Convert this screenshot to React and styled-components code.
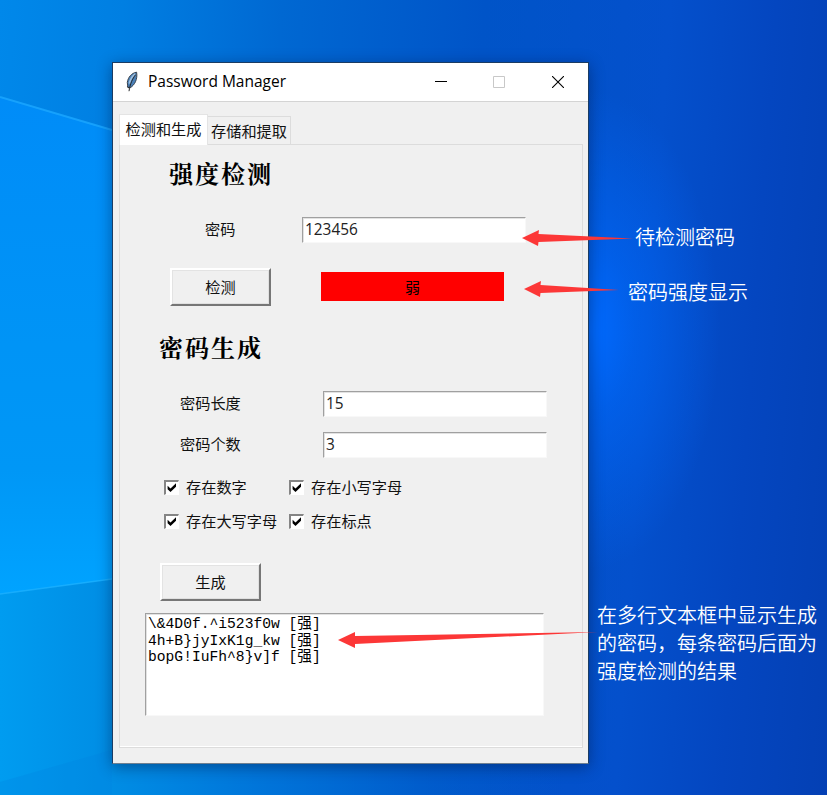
import React from "react";
import styled, { createGlobalStyle } from "styled-components";

const Global = createGlobalStyle`
  * { box-sizing: border-box; }
  body { margin: 0; }
`;

const ui = `"Open Sans", "Noto Sans CJK SC", sans-serif`;

const Desktop = styled.main`
  position: relative;
  width: 827px;
  height: 795px;
  overflow: hidden;
  display: flex;
  padding: 62px 0 0 112px;
  font-family: ${ui};
  background:
    radial-gradient(ellipse 130px 240px at 590px 330px, rgba(0, 106, 255, 1) 0%, rgba(0, 106, 255, 0.55) 35%, rgba(0, 106, 255, 0) 100%),
    linear-gradient(94deg, #0088ea 0%, #007fe2 14%, #0068d2 32%, #0054c8 55%, #0450cc 76%, #0446c0 88%, #0440b4 100%);
`;

const Wallpaper = styled.svg`
  position: absolute;
  inset: 0;
`;

const Window = styled.section`
  position: relative;
  width: 477px;
  height: 702px;
  flex: none;
  border: 1px solid #1b3c63;
  border-bottom-color: #6f8091;
  background: #f0f0f0;
  box-shadow: 0 3px 14px rgba(0, 20, 60, 0.45);
`;

const TitleBar = styled.header`
  display: flex;
  align-items: center;
  height: 39px;
  padding: 0 1px 0 11px;
  background: #fff;
  border-bottom: 1px solid #d4d4d4;
`;

const Title = styled.h1`
  flex: 1;
  margin: 0 0 2px 7px;
  font: 400 15.5px/20px ${ui};
  color: #000;
`;

const WindowButton = styled.button`
  display: flex;
  align-items: center;
  justify-content: center;
  width: 58.5px;
  height: 38px;
  padding: 0;
  border: 0;
  background: none;
`;

const Body = styled.div`
  padding: 12px 5px 0 6px;
`;

const Tabs = styled.nav`
  display: flex;
  align-items: flex-end;
  height: 30px;
`;

const Tab = styled.button`
  display: flex;
  align-items: center;
  justify-content: center;
  width: ${(p) => (p.$active ? 89 : 83)}px;
  height: ${(p) => (p.$active ? 31 : 28)}px;
  margin-bottom: ${(p) => (p.$active ? -1 : 0)}px;
  padding: 0 0 ${(p) => (p.$active ? 2 : 0)}px;
  border: 1px solid ${(p) => (p.$active ? "#e4e4e4" : "#dcdcdc")};
  border-bottom: 0;
  border-left-width: ${(p) => (p.$active ? 1 : 0)}px;
  background: ${(p) => (p.$active ? "#fff" : "#f0f0f0")};
  font: 15.2px/20px ${ui};
  color: #111;
  white-space: nowrap;
  z-index: ${(p) => (p.$active ? 1 : 0)};
`;

const Panel = styled.div`
  width: 464px;
  height: 604px;
  border: 1px solid #dcdcdc;
  box-shadow: inset 0 -1px #fff;
`;

const Heading = styled.h2`
  margin: 0;
  padding: ${(p) => p.$top}px 0 0 ${(p) => p.$left}px;
  font: 700 24px/34px "Noto Serif CJK SC", "Noto Sans CJK SC", serif;
  letter-spacing: 2px;
  color: #000;
`;

const Row = styled.div`
  display: flex;
  align-items: center;
  height: ${(p) => p.$height}px;
  margin-top: ${(p) => p.$gap}px;
  padding-left: ${(p) => p.$left}px;
`;

const Label = styled.label`
  width: ${(p) => p.$width}px;
  padding-bottom: 2px;
  font: 15.2px/20px ${ui};
  color: #111;
`;

const Entry = styled.input`
  width: 224px;
  height: 26px;
  padding: 0 1px 1px 2px;
  border: 1px solid #f8f8f8;
  border-top-color: #a0a0a0;
  border-left-color: #a0a0a0;
  border-radius: 0;
  outline: none;
  background: #fff;
  box-shadow: inset 1px 1px #e2e2e2;
  font: 15.4px/22px ${ui};
  color: #222;
`;

const PushButton = styled.button`
  width: 101px;
  height: 38px;
  padding: 0 0 1px;
  border: 2px solid #fff;
  border-right-color: #767676;
  border-bottom-color: #767676;
  background: #f0f0f0;
  box-shadow: inset 1px 1px #e3e3e3, inset -1px -1px #e0e0e0;
  font: 15.2px/20px ${ui};
  color: #111;
`;

const Strength = styled.output`
  display: flex;
  align-items: center;
  justify-content: center;
  width: 183px;
  height: 29px;
  margin: 0 0 1px 50px;
  background: #f00;
  font: 15px/20px ${ui};
  color: #000;
`;

const Options = styled.div`
  display: grid;
  grid-template-columns: 125px 140px;
  grid-auto-rows: 34px;
  margin-top: 12px;
  padding-left: 44px;
`;

const Option = styled.label`
  display: flex;
  align-items: center;
  gap: 7px;
  font: 15.2px/20px ${ui};
  color: #111;
  white-space: nowrap;
`;

const Box = styled.span`
  display: flex;
  width: 15px;
  height: 15px;
  border: 1px solid #fff;
  border-top: 2px solid #858585;
  border-left: 2px solid #858585;
  background: #fff;
`;

const Output = styled.pre`
  width: 399px;
  height: 103px;
  margin: 12px 0 0 25px;
  padding: 2px 2px;
  border: 1px solid #f8f8f8;
  border-top-color: #a0a0a0;
  border-left-color: #a0a0a0;
  background: #fff;
  box-shadow: inset 1px 1px #e2e2e2;
  font: 14.65px/16.5px "Liberation Mono", "Noto Sans CJK SC", monospace;
  color: #000;
`;

const Arrows = styled.svg`
  position: absolute;
  inset: 0;
`;

const Note = styled.p`
  position: absolute;
  left: ${(p) => p.$x}px;
  top: ${(p) => p.$y}px;
  margin: 0;
  font: 350 20px/28px "Noto Sans CJK SC", sans-serif;
  color: #fff;
  white-space: pre;
`;

const Feather = () => (
  <svg width="17" height="22" viewBox="0 0 17 22">
    <path d="M12.6 1.2C7.6 2 4 6.2 3.3 11.4L3.9 16.4 6.2 16.8C10.6 14 13.8 8.4 12.6 1.2Z" fill="#4a80b8" stroke="#39434e" strokeWidth="1" />
    <path d="M11.2 2.8C8.2 5.4 6 8.8 5.3 12.6" fill="none" stroke="#9fc0e0" strokeWidth="1.7" />
    <path d="M11.6 3.6C8.3 8.2 6.2 12.6 5 20.2M3.4 15.4 4.9 17.4" fill="none" stroke="#25282b" strokeWidth="1" />
  </svg>
);

const Check = () => (
  <svg width="12" height="12" viewBox="0 0 12 12">
    <path d="M1.6 3.8 4.5 6.6 10 1.3V4.7L4.5 10 1.6 7.2Z" fill="#000" />
  </svg>
);

const options = ["存在数字", "存在小写字母", "存在大写字母", "存在标点"];
const passwords = ["\\&4D0f.^i523f0w [强]", "4h+B}jyIxK1g_kw [强]", "bopG!IuFh^8}v]f [强]"];

export default function App() {
  return (
    <Desktop>
      <Global />
      <Wallpaper width="827" height="795">
        <defs>
          <linearGradient id="sky" x1="0" y1="0" x2="0" y2="1">
            <stop offset="0" stopColor="#008cf8" />
            <stop offset=".5" stopColor="#0094f6" />
            <stop offset=".75" stopColor="#0097f6" />
            <stop offset="1" stopColor="#00a3ff" />
          </linearGradient>
          <linearGradient id="floor" x1="0" y1="0" x2="1" y2="0">
            <stop offset="0" stopColor="#009cf0" />
            <stop offset=".2" stopColor="#008de4" />
            <stop offset=".5" stopColor="#0078dc" stopOpacity=".7" />
            <stop offset="1" stopColor="#0060cc" stopOpacity="0" />
          </linearGradient>
        </defs>
        <path d="M0 97 112 130 130 135V577L0 594Z" fill="url(#sky)" />
        <path d="M0 594 130 577 560 700V795H0Z" fill="url(#floor)" />
        <path d="M0 97 112 130" stroke="#1aa6ff" strokeWidth="2" opacity=".85" />
        <path d="M0 594 112 579" stroke="#1db2ff" strokeWidth="1.5" opacity=".8" />
        <path d="M0 782 112 750V795H0Z" fill="#0086e2" opacity=".3" />
      </Wallpaper>
      <Window>
        <TitleBar>
          <Feather />
          <Title>Password Manager</Title>
          <WindowButton aria-label="Minimize">
            <svg width="12" height="12"><path d="M0 5.5H12" stroke="#000" /></svg>
          </WindowButton>
          <WindowButton aria-label="Maximize" disabled>
            <svg width="12" height="12"><path d="M.5.5H11.5V11.5H.5Z" fill="none" stroke="#c8c8c8" /></svg>
          </WindowButton>
          <WindowButton aria-label="Close">
            <svg width="12" height="12"><path d="M0 0 12 12M12 0 0 12" stroke="#000" strokeWidth="1.1" /></svg>
          </WindowButton>
        </TitleBar>
        <Body>
          <Tabs>
            <Tab $active>检测和生成</Tab>
            <Tab>存储和提取</Tab>
          </Tabs>
          <Panel>
            <Heading $top={11} $left={49}>强度检测</Heading>
            <Row $height={27} $gap={26} $left={85}>
              <Label $width={97}>密码</Label>
              <Entry defaultValue="123456" />
            </Row>
            <Row $height={38} $gap={25} $left={50}>
              <PushButton>检测</PushButton>
              <Strength>弱</Strength>
            </Row>
            <Heading $top={24} $left={39}>密码生成</Heading>
            <Row $height={27} $gap={26} $left={60}>
              <Label $width={143}>密码长度</Label>
              <Entry defaultValue="15" />
            </Row>
            <Row $height={27} $gap={14} $left={60}>
              <Label $width={143}>密码个数</Label>
              <Entry defaultValue="3" />
            </Row>
            <Options>
              {options.map((text) => (
                <Option key={text}><Box><Check /></Box>{text}</Option>
              ))}
            </Options>
            <Row $height={38} $gap={25} $left={40}>
              <PushButton>生成</PushButton>
            </Row>
            <Output>{passwords.join("\n")}</Output>
          </Panel>
        </Body>
      </Window>
      <Arrows width="827" height="795" fill="#fc3737">
        <path d="M522 238 539 230 538.5 234 633 238.5 538.5 242 538 246Z" />
        <path d="M524 289 541 281 540.5 285 619 290 540.5 293 540 297Z" />
        <path d="M338 640 355 632V636L598 632 355 644V648Z" />
      </Arrows>
      <Note $x={635} $y={223}>待检测密码</Note>
      <Note $x={628} $y={278}>密码强度显示</Note>
      <Note $x={597} $y={601}>{"在多行文本框中显示生成\n的密码，每条密码后面为\n强度检测的结果"}</Note>
    </Desktop>
  );
}
